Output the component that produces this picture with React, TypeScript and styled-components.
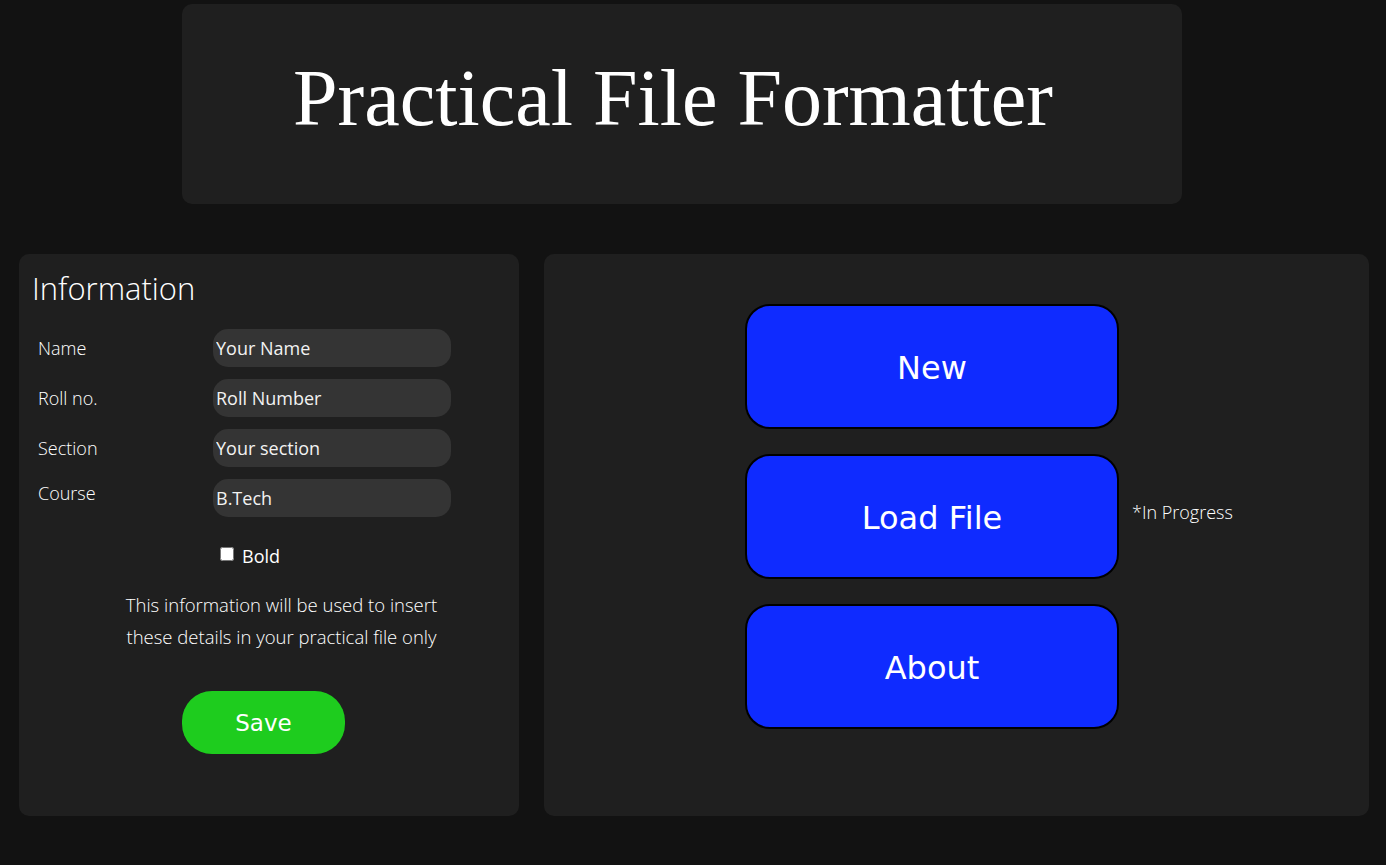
import React from "react";
import styled, { createGlobalStyle } from "styled-components";

const GlobalStyle = createGlobalStyle`
  html, body {
    margin: 0;
    padding: 0;
    background: #121212;
  }
  body {
    font-family: "Open Sans", "Noto Sans", sans-serif;
    color: #ffffff;
  }
`;

const Page = styled.div`
  width: 1386px;
  min-height: 865px;
  padding-top: 4px;
  box-sizing: border-box;
`;

const Header = styled.header`
  width: 1000px;
  height: 200px;
  margin-left: 182px;
  background: #1f1f1f;
  border-radius: 10px;
  display: flex;
  align-items: center;
  justify-content: center;
  padding: 0 18px 12px 0;
  box-sizing: border-box;
`;

const Title = styled.h1`
  margin: 0;
  font-family: "Liberation Serif", "Times New Roman", serif;
  font-weight: 400;
  font-size: 80px;
  line-height: 1;
  color: #ffffff;
`;

const Main = styled.main`
  display: flex;
  gap: 25px;
  margin-top: 50px;
  padding: 0 17px 0 19px;
`;

const Panel = styled.section<{ $width?: number }>`
  background: #1f1f1f;
  border-radius: 10px;
  height: 562px;
  box-sizing: border-box;
  ${(p) => (p.$width ? `width: ${p.$width}px; flex: none;` : "flex: 1;")}
`;

const InfoPanel = styled(Panel)`
  padding: 13px 0 0 13px;
  display: flex;
  flex-direction: column;
`;

const Heading = styled.h2`
  margin: 0;
  font-weight: 300;
  font-size: 31px;
  line-height: 42px;
  color: #ffffff;
`;

const Form = styled.div`
  display: grid;
  grid-template-columns: 175px 238px;
  row-gap: 12px;
  margin-top: 20px;
  padding-left: 6px;
`;

const Label = styled.label<{ $top?: boolean }>`
  font-weight: 300;
  font-size: 18px;
  color: #ffffff;
  display: flex;
  align-items: ${(p) => (p.$top ? "flex-start" : "center")};
  padding-top: ${(p) => (p.$top ? "2px" : "0")};
`;

const Input = styled.input`
  height: 38px;
  box-sizing: border-box;
  border: none;
  outline: none;
  border-radius: 15px;
  background: #343434;
  color: #f2f2f2;
  font-family: "Open Sans", "Noto Sans", sans-serif;
  font-size: 18px;
  padding: 0 0 0 3px;
  &::placeholder {
    color: #f2f2f2;
    opacity: 1;
  }
`;

const CheckRow = styled.label`
  display: flex;
  align-items: center;
  gap: 8px;
  margin: 27px 0 0 188px;
  font-size: 18px;
  color: #ffffff;
`;

const Check = styled.input`
  width: 14px;
  height: 14px;
  margin: 0 0 4px 0;
  accent-color: #ffffff;
`;

const Note = styled.p`
  margin: 21px 0 0 0;
  padding-left: 12px;
  text-align: center;
  font-weight: 300;
  font-size: 18.5px;
  line-height: 32px;
  color: #ffffff;
`;

const SaveButton = styled.button`
  width: 163px;
  height: 63px;
  margin: 38px 0 0 150px;
  border: none;
  border-radius: 30px;
  background: #1ecc1e;
  color: #ffffff;
  font-family: "DejaVu Sans", Verdana, sans-serif;
  font-size: 23px;
  cursor: pointer;
`;

const ActionList = styled.div`
  display: flex;
  flex-direction: column;
  gap: 25px;
  padding: 50px 0 0 201px;
`;

const ActionRow = styled.div`
  display: flex;
  align-items: center;
  gap: 13px;
`;

const ActionButton = styled.button`
  width: 374px;
  height: 125px;
  box-sizing: border-box;
  border: 2px solid #000000;
  border-radius: 25px;
  background: #0f2bff;
  color: #ffffff;
  font-family: "DejaVu Sans", Verdana, sans-serif;
  font-size: 32px;
  padding-top: 3px;
  cursor: pointer;
`;

const Progress = styled.span`
  font-weight: 300;
  font-size: 18px;
  color: #ffffff;
  margin-bottom: 9px;
`;

const fields = [
  { label: "Name", placeholder: "Your Name" },
  { label: "Roll no.", placeholder: "Roll Number" },
  { label: "Section", placeholder: "Your section" },
  { label: "Course", placeholder: "B.Tech", top: true },
];

export default function App() {
  return (
    <>
      <GlobalStyle />
      <Page>
        <Header>
          <Title>Practical File Formatter</Title>
        </Header>
        <Main>
          <InfoPanel $width={500}>
            <Heading>Information</Heading>
            <Form>
              {fields.map((f) => (
                <React.Fragment key={f.label}>
                  <Label $top={f.top}>{f.label}</Label>
                  <Input placeholder={f.placeholder} />
                </React.Fragment>
              ))}
            </Form>
            <CheckRow>
              <Check type="checkbox" />
              Bold
            </CheckRow>
            <Note>
              This information will be used to insert
              <br />
              these details in your practical file only
            </Note>
            <SaveButton>Save</SaveButton>
          </InfoPanel>
          <Panel>
            <ActionList>
              <ActionRow>
                <ActionButton>New</ActionButton>
              </ActionRow>
              <ActionRow>
                <ActionButton>Load File</ActionButton>
                <Progress>*In Progress</Progress>
              </ActionRow>
              <ActionRow>
                <ActionButton>About</ActionButton>
              </ActionRow>
            </ActionList>
          </Panel>
        </Main>
      </Page>
    </>
  );
}
